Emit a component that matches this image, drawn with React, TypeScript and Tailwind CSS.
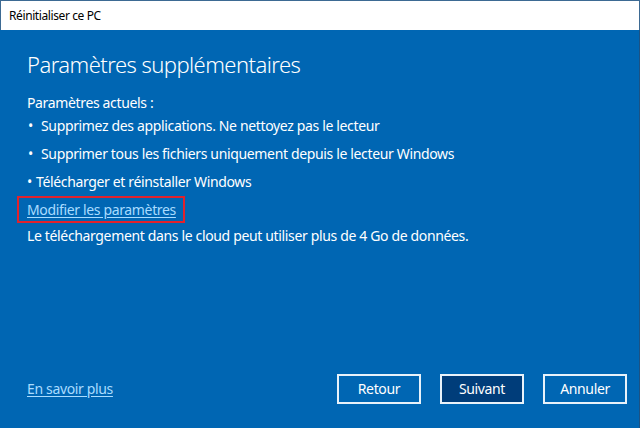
import React from 'react';

const bullets = [
    { text: 'Supprimez des applications. Ne nettoyez pas le lecteur', wide: true },
    { text: 'Supprimer tous les fichiers uniquement depuis le lecteur Windows', wide: true },
    { text: 'Télécharger et réinstaller Windows', wide: false },
];

export default function App() {
    return (
        <div
            className="w-[640px] h-[428px] flex flex-col bg-[#0066b3] overflow-hidden"
            style={{ fontFamily: '"Noto Sans", "Open Sans", sans-serif' }}
        >
            {/* Title bar */}
            <div className="h-[30px] shrink-0 bg-white border-t border-l border-r border-[#3d6a93] flex items-center pl-[8px]">
                <span className="text-[12px] tracking-[-0.4px] text-black">Réinitialiser ce PC</span>
            </div>

            {/* Content */}
            <div className="flex-1 flex flex-col px-[27px] text-white text-[14px] leading-[20px] tracking-[-0.35px] border-r border-[#1d5283]">
                <h1 className="mt-[18px] text-[22px] leading-[32px] font-light tracking-[-0.55px]">Paramètres supplémentaires</h1>

                <p className="mt-[13px]">Paramètres actuels :</p>

                <ul className="mt-[3px] flex flex-col gap-[8px]">
                    {bullets.map((b) => (
                        <li key={b.text} className="flex whitespace-nowrap">
                            <span className={b.wide ? 'w-[14px] pl-[1px]' : 'w-[9px]'}>•</span>
                            <span>{b.text}</span>
                        </li>
                    ))}
                </ul>

                {/* highlighted link */}
                <div className="mt-[4px] -ml-[10px] w-[168px] h-[27px] border-2 border-[#e1222d] flex items-center pl-[8px] whitespace-nowrap">
                    <a className="text-[#a9dcff] underline underline-offset-2">Modifier les paramètres</a>
                </div>

                <p className="mt-[3px] whitespace-nowrap">
                    Le téléchargement dans le cloud peut utiliser plus de 4 Go de données.
                </p>

                <div className="mt-auto mb-[24px] flex items-center justify-between">
                    <a className="text-[#a9dcff] underline underline-offset-2">En savoir plus</a>
                    <div className="flex gap-[19px] mr-[-15px]">
                        <button className="w-[84px] h-[30px] border-2 border-[#e8f2fa] text-white">Retour</button>
                        <button className="w-[84px] h-[30px] border-2 border-[#e8f2fa] bg-[#003d7a] text-white">Suivant</button>
                        <button className="w-[84px] h-[30px] border-2 border-[#e8f2fa] text-white">Annuler</button>
                    </div>
                </div>
            </div>
        </div>
    );
}
